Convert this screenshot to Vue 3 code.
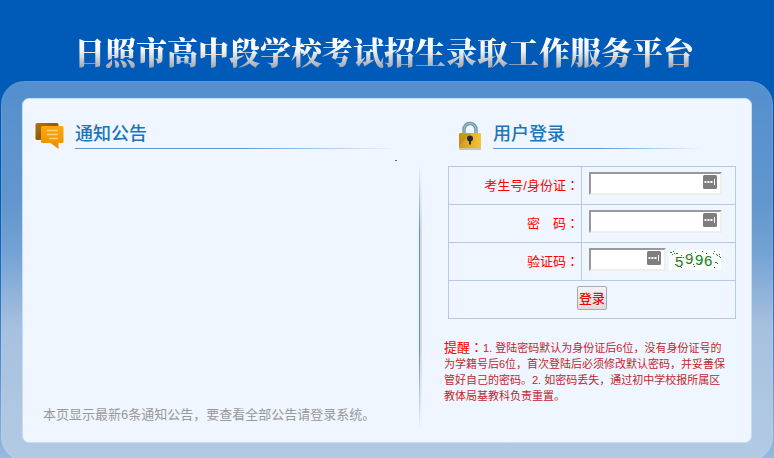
<script setup>
import { ref } from 'vue'

const account = ref('')
const password = ref('')
const code = ref('')

// 验证码噪点
const noise = [
  [1, 2], [2, 2], [4, 1], [5, 3], [7, 3], [8, 3], [3, 4], [12, 5], [14, 7], [6, 14],
  [11, 16], [12, 17], [22, 3], [26, 2], [31, 12], [37, 3], [39, 15], [44, 3], [45, 1],
  [46, 12], [47, 12], [48, 13], [47, 4], [48, 5], [50, 6], [51, 7], [50, 4], [45, 17],
  [24, 14], [25, 16], [33, 1]
]
</script>

<template>
  <div class="page">
    <h1 class="site-title">日照市高中段学校考试招生录取工作服务平台</h1>

    <div class="frame">
      <main class="panel">
        <!-- 通知公告 -->
        <section class="notice">
          <div class="section-head">
            <svg class="icon" width="30" height="30" viewBox="0 0 30 30">
              <defs>
                <linearGradient id="backBubble" x1="0" y1="0" x2="1" y2="1">
                  <stop offset="0" stop-color="#b87808" />
                  <stop offset="0.5" stop-color="#8f5a05" />
                  <stop offset="1" stop-color="#c98305" />
                </linearGradient>
                <linearGradient id="frontBubble" x1="0" y1="0" x2="0" y2="1">
                  <stop offset="0" stop-color="#ffa808" />
                  <stop offset="1" stop-color="#e98e02" />
                </linearGradient>
              </defs>
              <rect x="0.5" y="2" width="23" height="17" rx="1.5" fill="url(#backBubble)" />
              <path d="M7.5 5H27Q28.5 5 28.5 6.5V20.5Q28.5 22 27 22H23.5V28L15.5 22H7.5Q6 22 6 20.5V6.5Q6 5 7.5 5Z" fill="url(#frontBubble)" />
              <path d="M12 9.5H23M12 13.5H23M14 17.5H23" stroke="#ffd27a" stroke-width="1.5" />
            </svg>
            <h2>通知公告</h2>
          </div>
          <div class="notice-list"><span class="dot"></span></div>
          <p class="notice-foot">本页显示最新6条通知公告，要查看全部公告请登录系统。</p>
        </section>

        <div class="divider"></div>

        <!-- 用户登录 -->
        <section class="login">
          <div class="section-head">
            <svg class="icon" width="24" height="30" viewBox="0 0 24 30">
              <defs>
                <linearGradient id="lockBody" x1="0" y1="0" x2="1" y2="0">
                  <stop offset="0" stop-color="#d09c1e" />
                  <stop offset="1" stop-color="#f8c232" />
                </linearGradient>
              </defs>
              <rect x="0" y="26" width="22" height="3" rx="1" fill="#c9c3b4" />
              <path d="M5 13V8.5A6 6 0 0 1 17 8.5V13" fill="none" stroke="#6f9ba6" stroke-width="3.5" />
              <path d="M5 13V8.5A6 6 0 0 1 17 8.5V13" fill="none" stroke="#a9c7ce" stroke-width="1" />
              <rect x="0" y="12" width="22" height="15" rx="1" fill="url(#lockBody)" />
              <path d="M0 13L12 12L0 25Z" fill="#b78515" opacity="0.5" />
              <circle cx="11" cy="17.5" r="3" fill="#2b2a2c" />
              <path d="M10 18H12V23.5H10Z" fill="#2b2a2c" />
            </svg>
            <h2>用户登录</h2>
          </div>

          <form @submit.prevent>
            <table class="login-table">
              <tbody>
                <tr>
                  <th><label for="account">考生号/身份证<span class="colon">：</span></label></th>
                  <td>
                    <span class="field">
                      <input id="account" v-model="account" type="text" />
                      <svg class="key" width="14" height="14" viewBox="0 0 14 14">
                        <rect width="14" height="14" rx="1.5" fill="#7e7e7e" />
                        <path d="M1.5 6H3.5V8H1.5ZM4.5 6H6.5V8H4.5ZM7.5 6H9.5V8H7.5ZM11 4H12V10H11Z" fill="#fff" />
                      </svg>
                    </span>
                  </td>
                </tr>
                <tr>
                  <th><label for="password">密　码<span class="colon">：</span></label></th>
                  <td>
                    <span class="field">
                      <input id="password" v-model="password" type="password" />
                      <svg class="key" width="14" height="14" viewBox="0 0 14 14">
                        <rect width="14" height="14" rx="1.5" fill="#7e7e7e" />
                        <path d="M1.5 6H3.5V8H1.5ZM4.5 6H6.5V8H4.5ZM7.5 6H9.5V8H7.5ZM11 4H12V10H11Z" fill="#fff" />
                      </svg>
                    </span>
                  </td>
                </tr>
                <tr>
                  <th><label for="code">验证码<span class="colon">：</span></label></th>
                  <td>
                    <div class="code-row">
                      <span class="field short">
                        <input id="code" v-model="code" type="text" />
                        <svg class="key" width="14" height="14" viewBox="0 0 14 14">
                          <rect width="14" height="14" rx="1.5" fill="#7e7e7e" />
                          <path d="M1.5 6H3.5V8H1.5ZM4.5 6H6.5V8H4.5ZM7.5 6H9.5V8H7.5ZM11 4H12V10H11Z" fill="#fff" />
                        </svg>
                      </span>
                      <svg class="captcha" width="52" height="20" viewBox="0 0 52 20">
                        <rect width="52" height="20" fill="#fff" />
                        <g class="ink">
                          <text x="6" y="17">5</text>
                          <text x="16" y="14">9</text>
                          <text x="26" y="15">9</text>
                          <text x="35" y="16">6</text>
                          <rect v-for="([x, y], i) in noise" :key="i" :x="x" :y="y" width="1" height="1" />
                        </g>
                      </svg>
                    </div>
                  </td>
                </tr>
                <tr>
                  <td class="submit" colspan="2"><button type="submit">登录</button></td>
                </tr>
              </tbody>
            </table>
          </form>

          <p class="tips">
            <span class="warn">提醒<span class="colon">：</span></span>1. 登陆密码默认为身份证后6位，没有身份证号的<br />
            为学籍号后6位，首次登陆后必须修改默认密码，并妥善保<br />
            管好自己的密码。2. 如密码丢失，通过初中学校报所属区<br />
            教体局基教科负责重置。
          </p>
        </section>
      </main>
    </div>
  </div>
</template>

<style>
body {
  margin: 0;
  overflow: hidden;
}
</style>

<style scoped>
.page {
  min-height: 100vh;
  box-sizing: border-box;
  padding: 29px 1px 0;
  background: linear-gradient(#005bb8 0, #005bb8 200px, #1d6cc2 280px, #5b94d2 380px, #97b9df 458px);
  font-family: "Liberation Sans", "Noto Sans CJK SC", sans-serif;
  font-size: 13px;
}

/* 冒号居中显示 */
.colon {
  font-family: "Noto Sans CJK TC", sans-serif;
  line-height: 1;
}

.site-title {
  margin: 0 0 8px;
  padding-right: 6px;
  font-family: "Noto Serif CJK SC", "Noto Sans CJK SC", serif;
  font-size: 31px;
  line-height: 44px;
  font-weight: 900;
  text-align: center;
  white-space: nowrap;
  color: transparent;
  background: linear-gradient(#fff 30%, #f2f2f2 50%, #a8acb2 85%);
  background-clip: text;
}

.frame {
  padding: 17px 21px 18px;
  border-radius: 24px;
  background: linear-gradient(#538fce, #6296cd 32%, #74a2d4 45%, #a6c1df 65%, #b3cae4);
  box-shadow: inset 0 0 0 1px rgba(255, 255, 255, 0.08);
}

.panel {
  display: flex;
  box-sizing: border-box;
  min-height: 345px;
  border: 1px solid #c8ddf3;
  border-radius: 7px;
  background: #eff6ff;
}

.notice {
  flex: 1;
  display: flex;
  flex-direction: column;
  padding: 20px 22px 0 12px;
}

.section-head {
  display: flex;
  align-items: flex-start;
  gap: 10px;
  height: 32px;
}

.section-head .icon {
  flex: none;
  margin-top: 2px;
}

.section-head h2 {
  flex: 1;
  margin: 0;
  font-size: 18px;
  line-height: 30px;
  font-weight: 500;
  color: #1b75bc;
  background: linear-gradient(90deg, #5b96d8 0, #5b96d8 50%, rgba(91, 150, 216, 0)) bottom / 100% 1px no-repeat;
}

.notice-list {
  flex: 1;
  padding-top: 9px;
}

.dot {
  display: block;
  width: 2px;
  height: 1px;
  margin-left: auto;
  background: #4b6584;
}

.notice-foot {
  margin: 0 0 17px;
  padding-left: 8px;
  line-height: 20px;
  color: #999;
}

.divider {
  width: 3px;
  margin: 66px 0 12px;
  background: linear-gradient(90deg, #5b8dcb 0, #5b8dcb 1px, #d3dbe6 1px);
  mask-image: linear-gradient(transparent, #000 25%, #000 70%, transparent);
}

.login {
  width: 292px;
  padding: 20px 15px 0 22px;
}

.login .section-head {
  padding: 0 34px 0 15px;
}

.login-table {
  width: 288px;
  margin: 15px 0 0 4px;
  border-collapse: collapse;
}

.login-table th,
.login-table td {
  box-sizing: border-box;
  height: 38px;
  padding: 0;
  border: 1px solid #b4cae3;
}

.login-table th {
  width: 133px;
  padding: 0 2px 2px 0;
  font-weight: 400;
  text-align: right;
  color: #f00;
}

.login-table td {
  padding: 0 0 4px 7px;
}

.field {
  position: relative;
  display: block;
  width: 133px;
}

.field.short {
  width: 77px;
}

.field input {
  display: block;
  box-sizing: border-box;
  width: 100%;
  height: 23px;
  padding: 1px 20px 1px 2px;
  border: 2px solid;
  border-color: #999 #eee #eee #999;
  background: #fff;
}

.key {
  position: absolute;
  top: 3px;
  right: 5px;
}

.code-row {
  display: flex;
  align-items: center;
  gap: 3px;
}

.captcha {
  font-family: "Liberation Sans", sans-serif;
  font-size: 15px;
}

.ink {
  fill: #178017;
}

.login-table .submit {
  padding: 0 0 4px;
  text-align: center;
}

.submit button {
  height: 24px;
  padding: 0 1px;
  border: 1px solid #a9a9a9;
  border-radius: 2px;
  font-family: inherit;
  font-size: 13px;
  font-weight: 500;
  color: #f00;
  background: linear-gradient(#f4f4f4, #dcdcdc);
}

.tips {
  margin: 21px 0 0;
  font-size: 11px;
  line-height: 16px;
  white-space: nowrap;
  color: #c1272d;
}

.warn {
  font-size: 13px;
  color: #f00;
}
</style>
